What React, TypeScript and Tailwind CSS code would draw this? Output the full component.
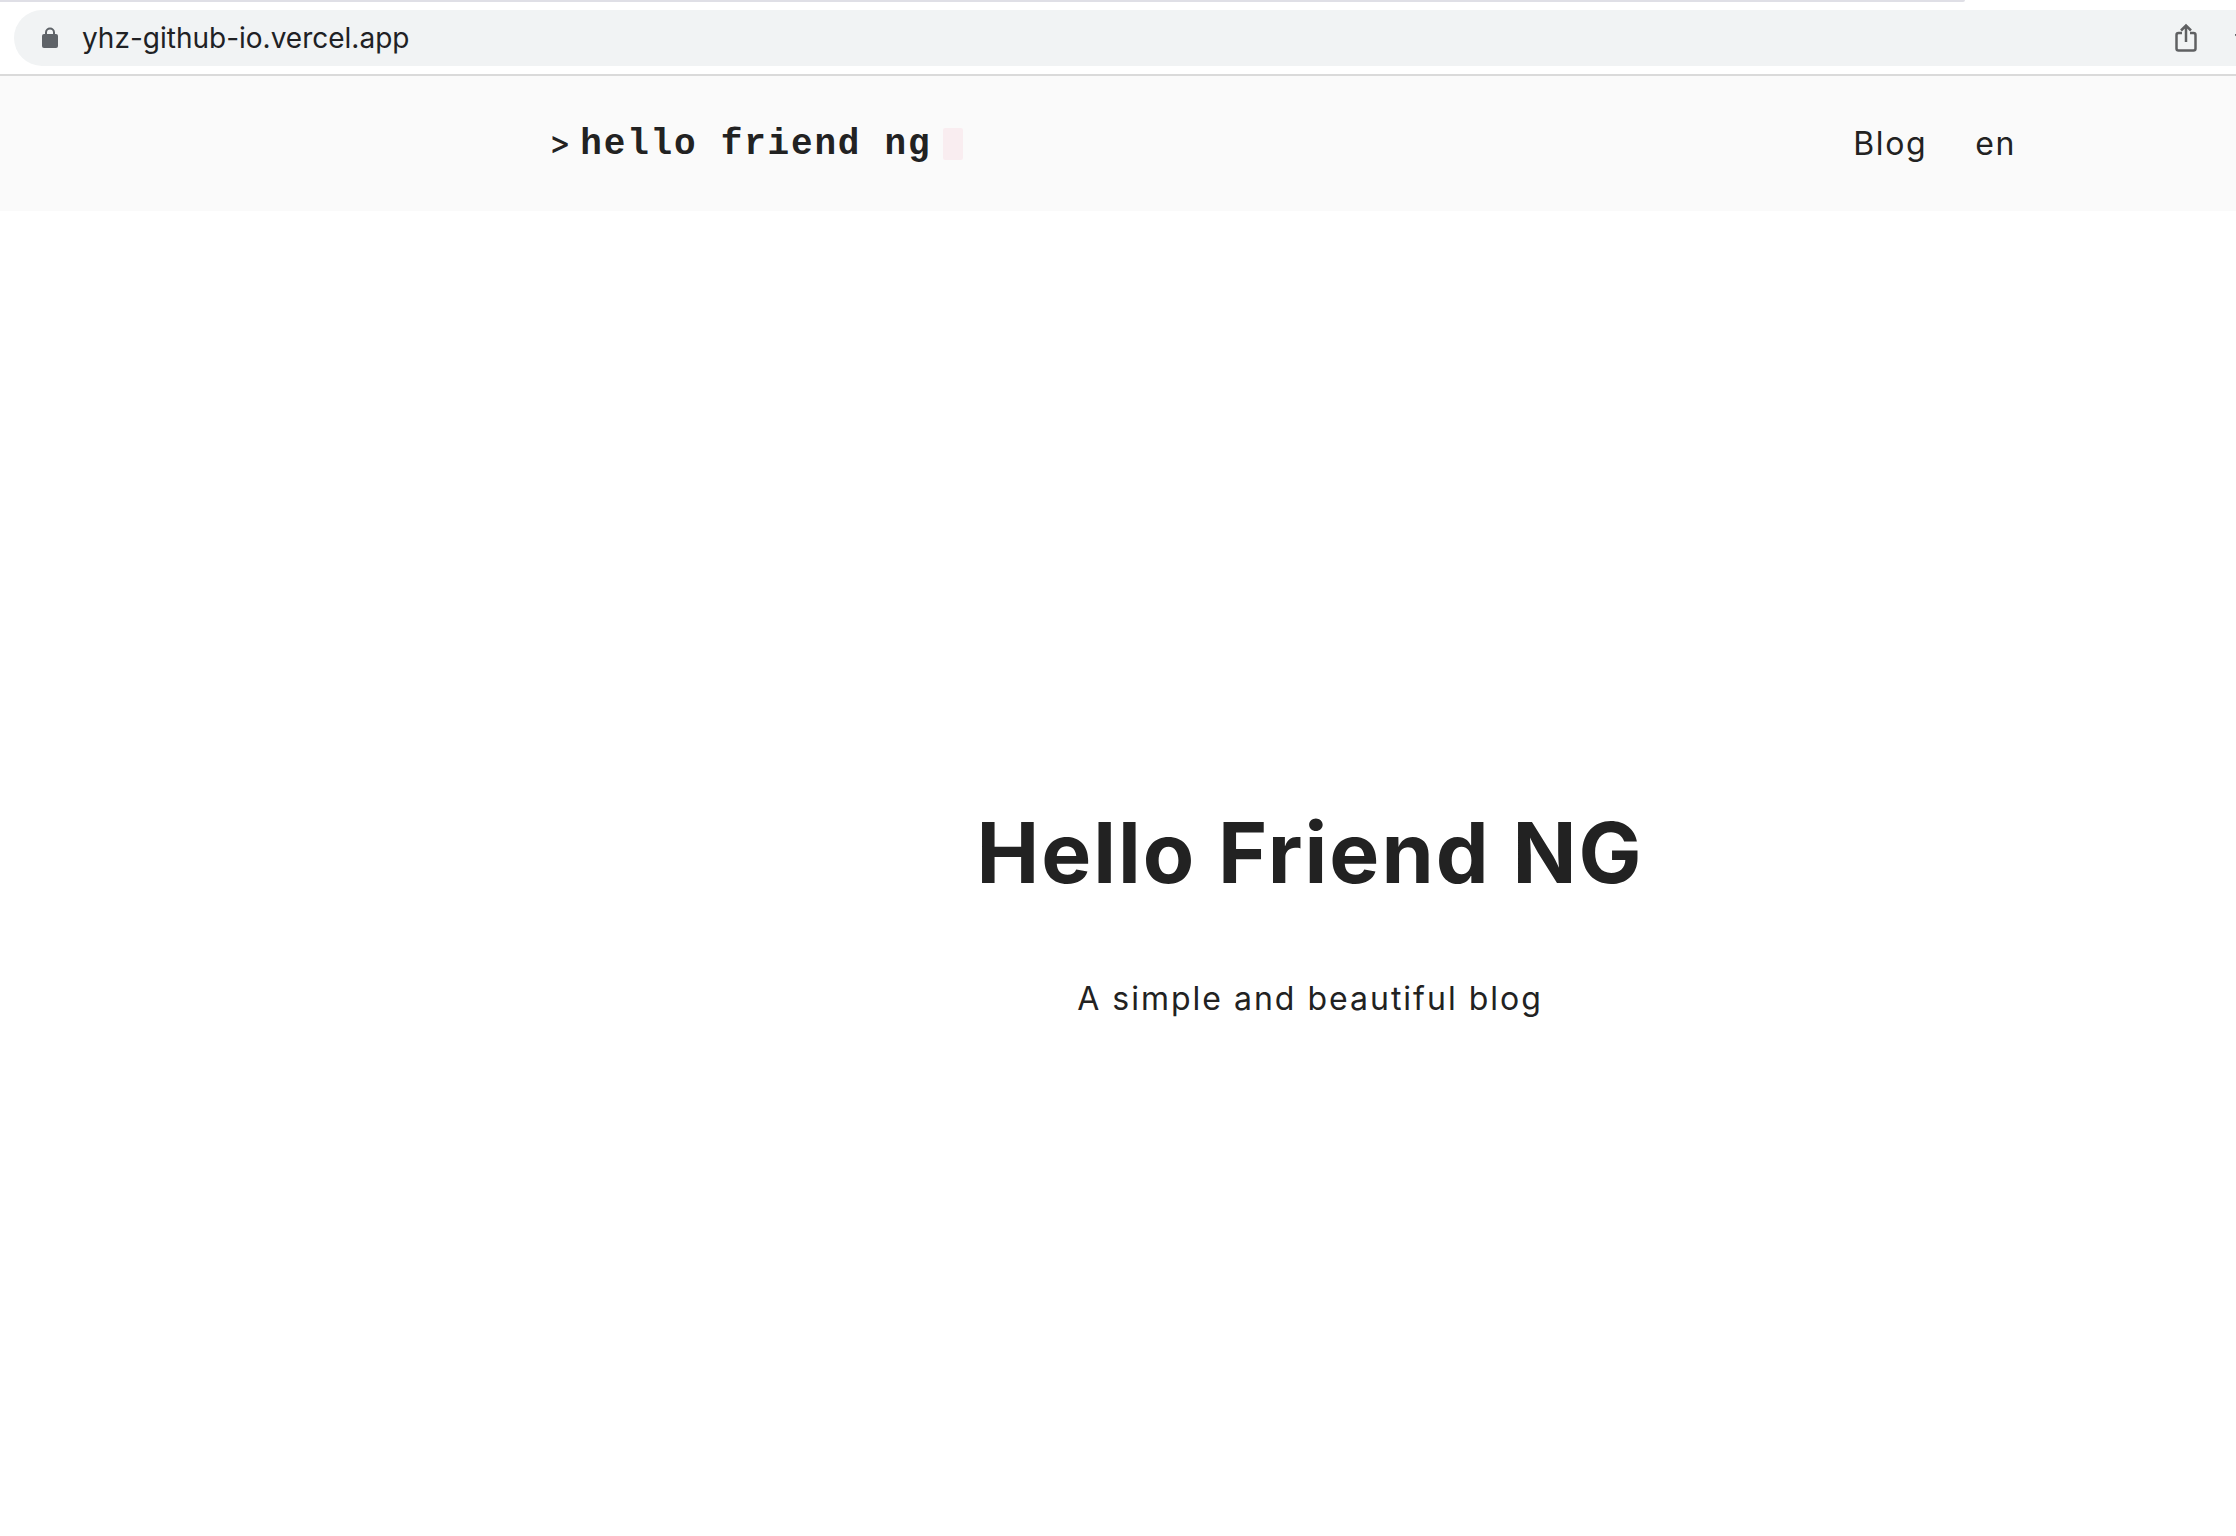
import React from 'react';

function LockIcon() {
  return (
    <svg className="h-[22px] w-4" viewBox="0 0 16 22" fill="none" aria-hidden="true">
      <path d="M4 8V5.5a4 4 0 0 1 8 0V8" stroke="#5f6368" strokeWidth="2" />
      <rect x="0" y="7" width="16" height="14" rx="2" fill="#5f6368" />
    </svg>
  );
}

function ShareIcon() {
  return (
    <svg
      className="h-[30px] w-[22px]"
      viewBox="0 0 22 30"
      fill="none"
      stroke="#5f6062"
      strokeWidth="2.5"
      aria-hidden="true"
    >
      <path d="M7 10H3.500A2 2 0 0 0 1.500 12V25.500A2 2 0 0 0 3.500 27.500H18.500A2 2 0 0 0 20.500 25.500V12A2 2 0 0 0 18.500 10H15" />
      <path d="M11 19V3M6 7.500L11 2.500L16 7.500" />
    </svg>
  );
}

function StarIcon() {
  return (
    <svg className="h-8 w-8" viewBox="0 0 32 32" fill="none" stroke="#5f6368" strokeWidth="2" aria-hidden="true">
      <path d="M16 2L20 12L31 13L23 20L25.500 30.500L16 25L6.500 30.500L9 20L1 13L12 12Z" />
    </svg>
  );
}

function BrowserBar() {
  return (
    <div className="border-b-2 border-[#dadada] bg-white">
      <div className="mr-[271px] h-0.5 rounded-br-lg bg-[#dfdfe6]" />
      <div className="mt-2 mb-2 ml-3.5 flex h-14 items-center overflow-hidden rounded-l-full bg-[#f1f3f4] pl-7">
        <LockIcon />
        <input
          type="text"
          aria-label="Address"
          defaultValue="yhz-github-io.vercel.app"
          className="ml-6 min-w-0 flex-1 bg-transparent font-['Inter',sans-serif] text-[28px] leading-10 text-[#202124] outline-none"
        />
        <button type="button" aria-label="Share" className="shrink-0">
          <ShareIcon />
        </button>
        <button type="button" aria-label="Bookmark" className="-mr-[31px] ml-[38px] shrink-0">
          <StarIcon />
        </button>
      </div>
    </div>
  );
}

function SiteHeader() {
  return (
    <header className="flex h-[135px] items-center justify-between bg-[#fafafa] pr-[220px] pl-[549px] text-[32px] leading-10">
      <a href="#" className="flex items-baseline">
        <span className="font-medium">&gt;</span>
        <span className="ml-2.5 font-['Liberation_Mono',monospace] text-4xl leading-10 font-bold tracking-wider">
          hello friend ng
        </span>
        <span className="ml-3 h-8 w-5 self-center rounded-xs bg-[#f9edf0]" />
      </a>
      <nav className="flex gap-12 tracking-wider">
        <a href="#blog">Blog</a>
        <a href="#en">en</a>
      </nav>
    </header>
  );
}

export default function App() {
  return (
    <div className="flex min-h-screen flex-col overflow-x-hidden bg-white font-['Inter',sans-serif] text-[#222222]">
      <BrowserBar />
      <SiteHeader />
      <main className="flex flex-1 flex-col items-center pt-[592px] pl-[384px] text-center">
        <h1 className="text-[84px] leading-[100px] font-bold tracking-[2px]">Hello Friend NG</h1>
        <p className="mt-[76px] text-[32px] leading-10 tracking-[2px]">A simple and beautiful blog</p>
      </main>
    </div>
  );
}
